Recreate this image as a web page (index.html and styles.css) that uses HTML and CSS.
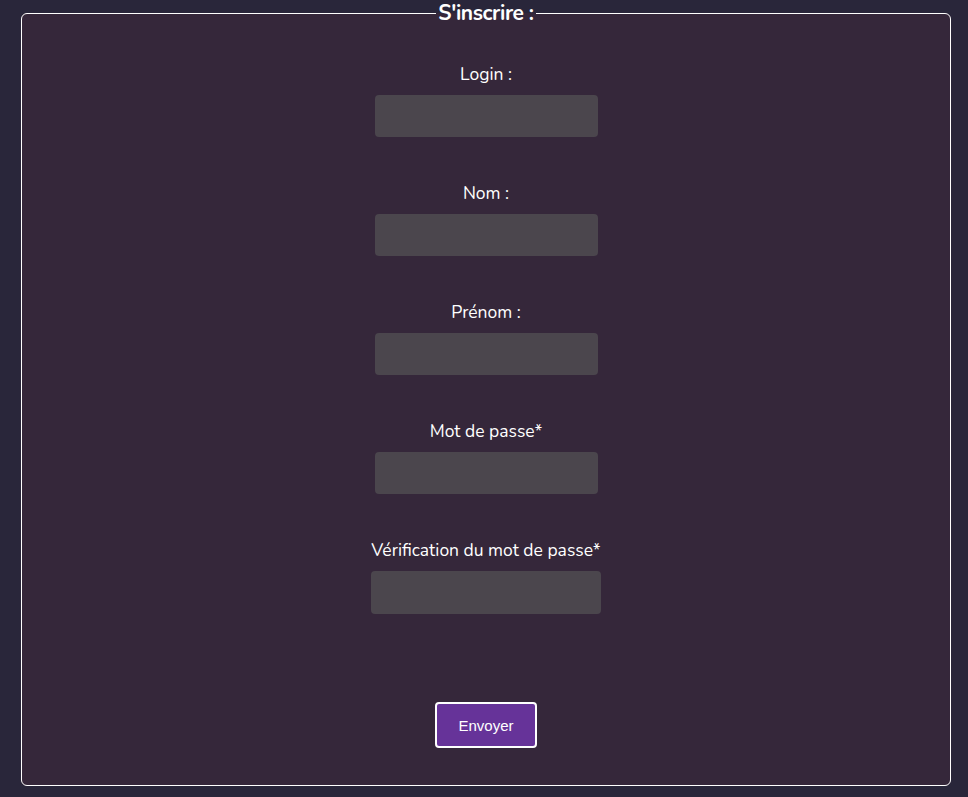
FILE: index.html
```html
<!DOCTYPE html>
<html lang="fr">
<head>
<meta charset="UTF-8">
<title>S'inscrire</title>
<link rel="stylesheet" href="styles.css">
</head>
<body>
<form class="signup" action="#" method="post">
<fieldset>
  <legend>S'inscrire :</legend>

  <div class="field">
    <label for="login">Login :</label>
    <input type="text" id="login" name="login">
  </div>

  <div class="field">
    <label for="nom">Nom :</label>
    <input type="text" id="nom" name="nom">
  </div>

  <div class="field">
    <label for="prenom">Prénom :</label>
    <input type="text" id="prenom" name="prenom">
  </div>

  <div class="field">
    <label for="mdp">Mot de passe*</label>
    <input type="password" id="mdp" name="mdp">
  </div>

  <div class="field">
    <label for="mdp2">Vérification du mot de passe*</label>
    <input type="password" id="mdp2" name="mdp2" class="wide">
  </div>

  <div class="actions">
    <button type="submit">Envoyer</button>
  </div>
</fieldset>
</form>
</body>
</html>
```

FILE: styles.css
```css
/* page */
body {
    margin: 0;
    padding: 0 17px 0 21px;
    background: #29263a;
    font-family: "Nunito", "Lato", "Noto Sans", sans-serif;
    color: #fff;
}

.signup fieldset {
    margin: 0;
    padding: 37px 0 36px;
    height: 786px;
    box-sizing: border-box;
    border: 1px solid #fff;
    border-radius: 6px;
    background: #35273a;
    display: flex;
    flex-direction: column;
    align-items: center;
}

.signup legend {
    margin: 0 auto;
    padding: 0 2px;
    font-size: 21px;
    font-weight: bold;
    line-height: 26px;
    letter-spacing: -0.4px;
}

/* one label + input pair */
.field {
    display: flex;
    flex-direction: column;
    align-items: center;
    margin-bottom: 45px;
}

.field label {
    font-size: 17.5px;
    line-height: 23px;
    margin-bottom: 9px;
}

.field input {
    width: 223px;
    height: 42px;
    box-sizing: border-box;
    border: 0;
    border-radius: 4px;
    background: #4b464d;
    color: #fff;
    font-size: 15px;
    padding: 0 10px;
}
.field input.wide {
    width: 230px;
    height: 43px;
}

.actions {
    margin-top: 43px;
}

.actions button {
    width: 102px;
    height: 46px;
    border: 2px solid #fff;
    border-radius: 4px;
    background: #663399;
    color: #fff;
    font-family: "Liberation Sans", Arial, sans-serif;
    font-size: 15px;
    cursor: pointer;
}
```
